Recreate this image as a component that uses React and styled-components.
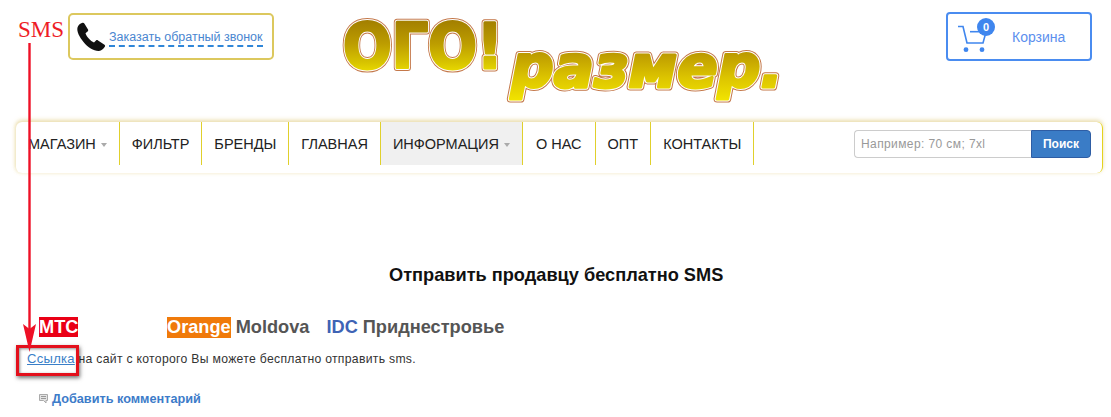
import React from 'react'
import styled, { createGlobalStyle } from 'styled-components'

const GlobalStyle = createGlobalStyle`
    html, body {
        margin: 0;
        padding: 0;
        background: #fff;
        overflow: hidden;
    }
    body {
        font-family: "Liberation Sans", Arial, sans-serif;
        color: #333;
    }
    * { box-sizing: border-box; }
`

const Page = styled.div`
    position: relative;
    width: 1111px;
    height: 417px;
    overflow: hidden;
`

const Header = styled.header`
    display: flex;
    align-items: flex-start;
    height: 122px;
    padding: 0 19px 0 68px;
`

const CallBox = styled.div`
    display: flex;
    align-items: center;
    width: 206px;
    height: 47px;
    margin-top: 13px;
    padding: 0 0 0 6px;
    border: 2px solid #dcc85e;
    border-radius: 5px;
    flex-shrink: 0;
`

const CallLink = styled.a`
    margin: 3px 0 0 3px;
    font-size: 12.5px;
    line-height: 16px;
    color: #4a86d0;
    border-bottom: 2px dashed #2f86d8;
`

const Logo = styled.svg`
    display: block;
    width: 460px;
    height: 122px;
    margin-left: 62px;
    flex-shrink: 0;
`

const CartBox = styled.div`
    display: flex;
    align-items: center;
    width: 146px;
    height: 49px;
    margin: 12px 0 0 auto;
    padding-left: 9px;
    border: 2px solid #4a8cf0;
    border-radius: 4px;
`

const CartIcon = styled.div`
    position: relative;
    width: 40px;
    height: 40px;
    flex-shrink: 0;
`

const CartBadge = styled.span`
    position: absolute;
    top: 1px;
    left: 20px;
    width: 18px;
    height: 18px;
    border-radius: 50%;
    background: #3f86ee;
    color: #fff;
    font-size: 11px;
    font-weight: bold;
    line-height: 18px;
    text-align: center;
`

const CartLabel = styled.span`
    margin-left: 15px;
    font-size: 14px;
    color: #5b8fee;
`

const Navbar = styled.nav`
    display: flex;
    align-items: flex-start;
    height: 51px;
    margin: 0 8px 0 16px;
    border-radius: 6px;
    border-right: 1px solid #e4d21e;
    box-shadow: 0 -2px 4px rgba(222, 200, 120, 0.6), -2px 0 3px rgba(240, 225, 170, 0.25), 0 2px 3px rgba(245, 238, 205, 0.2);
`

const NavList = styled.ul`
    display: flex;
    margin: 0;
    padding: 0;
    list-style: none;
`

const NavItem = styled.li`
    display: flex;
    align-items: center;
    height: 43px;
    padding: 0 ${p => p.$pad || 12}px;
    border-right: 1px solid #e0d02c;
    background: ${p => p.$active ? '#f0f0f0' : 'transparent'};
    font-size: 14.5px;
    color: #222;
    white-space: nowrap;
`

const Caret = styled.i`
    display: inline-block;
    width: 0;
    height: 0;
    margin-left: 5px;
    margin-top: 2px;
    border-top: 4px solid #aaa;
    border-left: 3px solid transparent;
    border-right: 3px solid transparent;
`

const SearchForm = styled.form`
    display: flex;
    margin: 8px 0 0 auto;
    padding-right: 11px;
`

const SearchInput = styled.input`
    width: 177px;
    height: 28px;
    padding: 0 6px;
    border: 1px solid #ccc;
    border-right: 0;
    border-radius: 4px 0 0 4px;
    font-family: inherit;
    font-size: 12px;
    letter-spacing: 0.4px;
    &::placeholder { color: #999; opacity: 1; }
`

const SearchButton = styled.button`
    width: 60px;
    height: 28px;
    padding: 0;
    border: 1px solid #2e5da4;
    border-radius: 0 4px 4px 0;
    background: #3a7cc6;
    color: #fff;
    font-family: inherit;
    font-size: 12px;
    font-weight: bold;
`

const Content = styled.main`
    padding: 0 0 0 27px;
`

const Title = styled.h2`
    margin: 91px 0 0;
    padding-left: 362px;
    font-size: 18.2px;
    line-height: 22px;
    font-weight: bold;
    color: #111;
`

const Operators = styled.div`
    display: flex;
    align-items: center;
    height: 22px;
    margin: 30px 0 0 12px;
    font-size: 18.2px;
    font-weight: bold;
    color: #555;
`

const Mts = styled.span`
    width: 128px;
    & > b {
        background: #ea0016;
        color: #fff;
    }
`

const Orange = styled.b`
    margin-right: 5px;
    background: #f07a0a;
    color: #fff;
`

const Idc = styled.span`
    margin: 0 5px 0 17px;
    color: #3f63b5;
`

const LinkRow = styled.p`
    margin: 13px 0 0;
    font-size: 12.2px;
    line-height: 16px;
    letter-spacing: 0.3px;
    color: #333;
`

const SmsLink = styled.a`
    font-size: 13px;
    color: #3a7fc8;
    text-decoration: underline;
    letter-spacing: 0.3px;
`

const CommentRow = styled.div`
    display: flex;
    align-items: center;
    gap: 4px;
    margin: 25px 0 0 12px;
    font-size: 12.7px;
    font-weight: bold;
    color: #3d7cc9;
`

const Annotation = styled.div`
    position: absolute;
    left: 18px;
    top: 17px;
    font-family: "Liberation Serif", "Times New Roman", serif;
    font-size: 23px;
    line-height: 26px;
    color: #ee1c25;
`

const ArrowLayer = styled.svg`
    position: absolute;
    left: 0;
    top: 0;
    width: 1111px;
    height: 417px;
    pointer-events: none;
`

const HighlightBox = styled.div`
    position: absolute;
    left: 16px;
    top: 345px;
    width: 63px;
    height: 31px;
    border: 3px solid #e3101c;
    box-shadow: 1px 2px 4px rgba(0, 0, 0, 0.55), inset 1px 1px 3px rgba(0, 0, 0, 0.45);
`

function PhoneIcon() {
    return (
        <svg width="30" height="30" viewBox="0 0 30 30">
            <path
                fill="#111"
                d="M1.5 5.5 C2 3.5 4 1.5 6.5 0.8 C7.5 0.6 8 1 8.5 1.8 L12 7.5 C12.4 8.3 12.2 9 11.5 9.6 L9.5 11.2 C10.5 14.5 14.5 19 18 20.5 L20 18.6 C20.6 18 21.3 18 22 18.4 L28.5 22.8 C29.2 23.3 29.3 24 28.8 24.8 C27.5 27 25.5 28.8 23 29 C18 29.3 12 25.5 7.5 20 C3.5 15 0.5 9.5 1.5 5.5 Z"
            />
        </svg>
    )
}

function CartDrawing() {
    return (
        <svg width="40" height="40" viewBox="0 0 40 40">
            <path fill="none" stroke="#3f86ee" strokeWidth="1.6" d="M1 9.5 H6 L10 26 H26 L29 15" />
            <path fill="none" stroke="#3f86ee" strokeWidth="1.6" d="M13 14.7 H29" />
            <circle cx="9" cy="32.7" r="2.4" fill="#3f86ee" />
            <circle cx="25" cy="32.7" r="2.4" fill="#3f86ee" />
        </svg>
    )
}

function CommentIcon() {
    return (
        <svg width="9" height="10" viewBox="0 0 9 10">
            <path fill="#e4e4e4" stroke="#aaa" strokeWidth="1" d="M0.5 0.5 H8.5 V6.5 H7 V9 L4.5 6.5 H0.5 Z" />
            <path stroke="#999" strokeWidth="1" d="M2 2.5 H7 M2 4.5 H7" />
        </svg>
    )
}

// three stacked copies of each word give the brown line, the white line and the gold face
function LogoWord({ x, y, size, width, italic, fill, children }) {
    const shared = {
        x,
        y,
        fontSize: size,
        fontFamily: '"DejaVu Sans", sans-serif',
        fontWeight: 'bold',
        fontStyle: italic ? 'italic' : 'normal',
        textLength: width,
        lengthAdjust: 'spacingAndGlyphs',
        strokeLinejoin: 'round',
    }
    return (
        <>
            <text {...shared} fill="none" stroke="#c4784a" strokeWidth="7">{children}</text>
            <text {...shared} fill="none" stroke="#ffffff" strokeWidth="5">{children}</text>
            <text {...shared} fill={fill} stroke={fill} strokeWidth="3">{children}</text>
        </>
    )
}

function LogoArt() {
    return (
        <Logo viewBox="0 0 460 122">
            <defs>
                <linearGradient id="goldTop" gradientUnits="userSpaceOnUse" x1="0" y1="18" x2="0" y2="74">
                    <stop offset="0" stopColor="#a07c00" />
                    <stop offset="0.45" stopColor="#bc9c00" />
                    <stop offset="0.8" stopColor="#d8c400" />
                    <stop offset="1" stopColor="#eee000" />
                </linearGradient>
                <linearGradient id="goldBottom" gradientUnits="userSpaceOnUse" x1="0" y1="50" x2="0" y2="105">
                    <stop offset="0" stopColor="#b89400" />
                    <stop offset="0.5" stopColor="#dcc400" />
                    <stop offset="1" stopColor="#f6ea00" />
                </linearGradient>
            </defs>
            <LogoWord x={7} y={68} size={63} width={160} fill="url(#goldTop)">ОГО!</LogoWord>
            <LogoWord x={175} y={87} size={58} width={272} italic fill="url(#goldBottom)">размер.</LogoWord>
        </Logo>
    )
}

export default function App() {
    return (
        <Page>
            <GlobalStyle />
            <Header>
                <CallBox>
                    <PhoneIcon />
                    <CallLink>Заказать обратный звонок</CallLink>
                </CallBox>
                <LogoArt />
                <CartBox>
                    <CartIcon>
                        <CartDrawing />
                        <CartBadge>0</CartBadge>
                    </CartIcon>
                    <CartLabel>Корзина</CartLabel>
                </CartBox>
            </Header>
            <Navbar>
                <NavList>
                    <NavItem>МАГАЗИН<Caret /></NavItem>
                    <NavItem>ФИЛЬТР</NavItem>
                    <NavItem>БРЕНДЫ</NavItem>
                    <NavItem>ГЛАВНАЯ</NavItem>
                    <NavItem $active>ИНФОРМАЦИЯ<Caret /></NavItem>
                    <NavItem $pad={13}>О НАС</NavItem>
                    <NavItem>ОПТ</NavItem>
                    <NavItem>КОНТАКТЫ</NavItem>
                </NavList>
                <SearchForm>
                    <SearchInput placeholder="Например: 70 см; 7xl" />
                    <SearchButton type="button">Поиск</SearchButton>
                </SearchForm>
            </Navbar>
            <Content>
                <Title>Отправить продавцу бесплатно SMS</Title>
                <Operators>
                    <Mts><b>МТС</b></Mts>
                    <Orange>Orange</Orange>
                    Moldova
                    <Idc>IDC</Idc>
                    Приднестровье
                </Operators>
                <LinkRow><SmsLink>Ссылка</SmsLink> на сайт с которого Вы можете бесплатно отправить sms.</LinkRow>
                <CommentRow><CommentIcon />Добавить комментарий</CommentRow>
            </Content>
            <Annotation>SMS</Annotation>
            <HighlightBox />
            <ArrowLayer viewBox="0 0 1111 417">
                <path d="M29.5 43 V340" stroke="#ee1026" strokeWidth="2.4" fill="none" />
                <path d="M23 324 L29.5 352 L36 324 L29.5 329 Z" fill="#ee1026" />
            </ArrowLayer>
        </Page>
    )
}
